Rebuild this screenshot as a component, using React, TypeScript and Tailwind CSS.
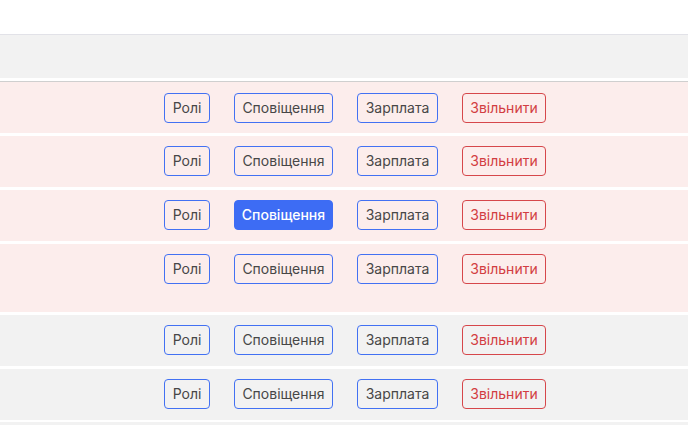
const rows = [
  { tone: 'pink', h: 'h-[52px] pt-[11px] border-t border-[#cfcfcf]' },
  { tone: 'pink', h: 'h-[51px] pt-[10px]' },
  { tone: 'pink', h: 'h-[51px] pt-[10px]', active: true },
  { tone: 'pink', h: 'h-[68px] pt-[10px]' },
  { tone: 'gray', h: 'h-[51px] pt-[10px]' },
  { tone: 'gray', h: 'h-[51px] pt-[10px]' },
];

function Btn({ label, kind, w, active }: { label: string; kind: 'blue' | 'red'; w: string; active?: boolean }) {
  const base = `${w} h-[30px] rounded-[4px] border text-[14px] leading-[28px] text-center whitespace-nowrap`;
  if (active) {
    return <button className={`${base} border-[#3d6cf4] bg-[#3d6cf4] text-white font-medium`}>{label}</button>;
  }
  if (kind === 'red') {
    return <button className={`${base} border-[#d6474b] text-[#d23d42]`}>{label}</button>;
  }
  return <button className={`${base} border-[#4271f3] text-[#474747]`}>{label}</button>;
}

export default function App() {
  return (
    <div className="w-[688px] h-[425px] overflow-hidden bg-white font-['Inter','Noto_Sans',sans-serif]">
      <div className="h-[35px] border-b border-[#e2e2e8]" />
      <div className="h-[43px] bg-[#f2f2f2]" />
      <div className="flex flex-col gap-[3px] mt-[3px]">
        {rows.map((r, i) => (
          <div
            key={i}
            className={[
              'flex gap-[24px] pl-[164px] items-start',
              r.h,
              r.tone === 'pink' ? 'bg-[#fcedec]' : 'bg-[#f2f2f2]',
            ].join(' ')}
          >
            <Btn label="Ролі" kind="blue" w="w-[46px]" />
            <Btn label="Сповіщення" kind="blue" w="w-[99px]" active={r.active} />
            <Btn label="Зарплата" kind="blue" w="w-[81px]" />
            <Btn label="Звільнити" kind="red" w="w-[84px]" />
          </div>
        ))}
        <div className="h-[20px] bg-[#f2f2f2] -mt-[1px]" />
      </div>
    </div>
  );
}
